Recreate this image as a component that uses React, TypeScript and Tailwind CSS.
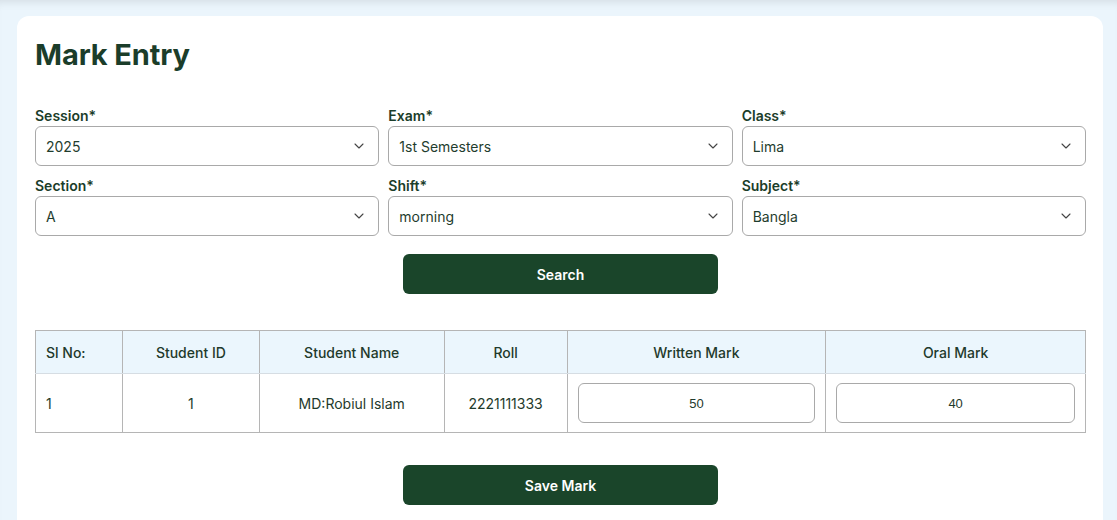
import React from 'react';
import { ChevronDown } from 'lucide-react';

const fields = [
    { label: 'Session*', value: '2025' },
    { label: 'Exam*', value: '1st Semesters' },
    { label: 'Class*', value: 'Lima' },
    { label: 'Section*', value: 'A' },
    { label: 'Shift*', value: 'morning' },
    { label: 'Subject*', value: 'Bangla' },
];

const SelectField: React.FC<{ label: string; value: string }> = ({ label, value }) => (
    <div className="flex flex-col">
        <label className="text-[14px] font-semibold text-[#1b3d2a] leading-[20px] h-[20px]">{label}</label>
        <div className="h-[40px] border border-[#a9a9a9] rounded-[6px] flex items-center justify-between pl-[10px] pr-[11px] bg-white">
            <span className="text-[14px] text-[#1f3d2e]">{value}</span>
            <ChevronDown size={16} strokeWidth={1.6} className="text-[#444]" />
        </div>
    </div>
);

export default function App() {
    return (
        <div className="min-h-[520px] bg-[#ebf5fc] px-[17px] pt-[16px] shadow-[inset_0_8px_8px_-6px_rgba(0,0,0,0.10)]" style={{ fontFamily: 'Inter, "Noto Sans", sans-serif' }}>
            <div className="bg-white rounded-[12px] pl-[18px] pr-[17px] pt-[19px] pb-[40px] w-[1086px]">
                <h1 className="text-[29px] font-bold text-[#1b3d2a] leading-[40px] tracking-[-0.1px]">Mark Entry</h1>

                <div className="grid grid-cols-3 gap-x-[9px] gap-y-[10px] mt-[31px]">
                    {fields.map(f => (
                        <SelectField key={f.label} label={f.label} value={f.value} />
                    ))}
                </div>

                <div className="flex justify-center mt-[18px]">
                    <button className="w-[315px] h-[40px] rounded-[6px] bg-[#1a452a] text-white text-[14px] font-semibold">
                        Search
                    </button>
                </div>

                <table className="w-full mt-[36px] border-collapse text-[14px] text-[#1f3a2c]">
                    <colgroup>
                        <col className="w-[87px]" />
                        <col className="w-[137px]" />
                        <col className="w-[185px]" />
                        <col className="w-[123px]" />
                        <col className="w-[259px]" />
                        <col className="w-[260px]" />
                    </colgroup>
                    <thead>
                        <tr className="bg-[#ebf6fd] h-[43px]">
                            <th className="border border-[#b5b5b5] border-b-[#d6dde3] font-medium text-left pl-[10px]">Sl No:</th>
                            <th className="border border-[#b5b5b5] border-b-[#d6dde3] font-medium">Student ID</th>
                            <th className="border border-[#b5b5b5] border-b-[#d6dde3] font-medium">Student Name</th>
                            <th className="border border-[#b5b5b5] border-b-[#d6dde3] font-medium">Roll</th>
                            <th className="border border-[#b5b5b5] border-b-[#d6dde3] font-medium">Written Mark</th>
                            <th className="border border-[#b5b5b5] border-b-[#d6dde3] font-medium">Oral Mark</th>
                        </tr>
                    </thead>
                    <tbody>
                        <tr className="h-[59px]">
                            <td className="border border-[#b5b5b5] pl-[10px]">1</td>
                            <td className="border border-[#b5b5b5] text-center">1</td>
                            <td className="border border-[#b5b5b5] text-center">MD:Robiul Islam</td>
                            <td className="border border-[#b5b5b5] text-center">2221111333</td>
                            <td className="border border-[#b5b5b5] px-[10px]">
                                <input readOnly value="50" className="w-full h-[40px] border border-[#a9a9a9] rounded-[6px] text-center text-[13px] text-[#1f3a2c] outline-none" style={{ fontFamily: '"Liberation Sans", Arial, sans-serif' }} />
                            </td>
                            <td className="border border-[#b5b5b5] px-[10px]">
                                <input readOnly value="40" className="w-full h-[40px] border border-[#a9a9a9] rounded-[6px] text-center text-[13px] text-[#1f3a2c] outline-none" style={{ fontFamily: '"Liberation Sans", Arial, sans-serif' }} />
                            </td>
                        </tr>
                    </tbody>
                </table>

                <div className="flex justify-center mt-[32px]">
                    <button className="w-[315px] h-[40px] rounded-[6px] bg-[#1a452a] text-white text-[14px] font-semibold">
                        Save Mark
                    </button>
                </div>
            </div>
        </div>
    );
}
